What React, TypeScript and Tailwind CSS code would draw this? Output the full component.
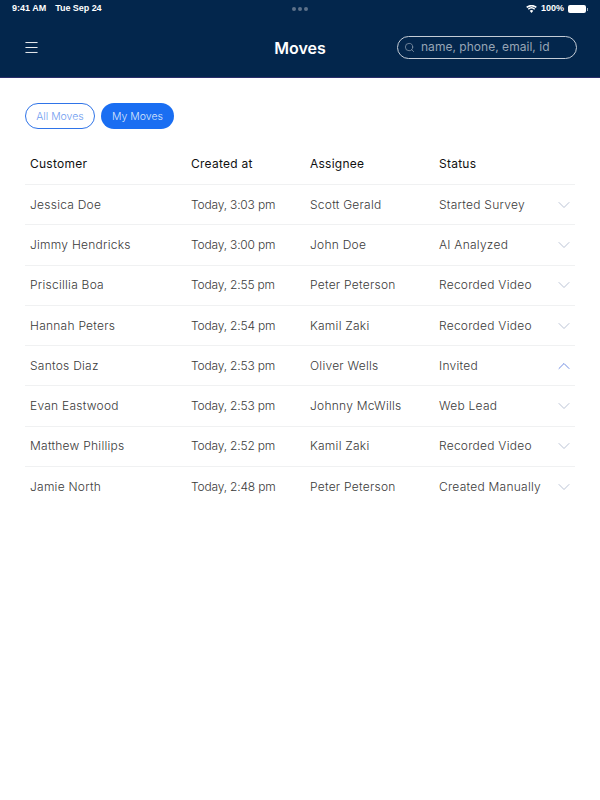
import { ChevronDown, ChevronUp, Menu, Search } from "lucide-react";

const rows = [
  { customer: "Jessica Doe", created: "Today, 3:03 pm", assignee: "Scott Gerald", status: "Started Survey" },
  { customer: "Jimmy Hendricks", created: "Today, 3:00 pm", assignee: "John Doe", status: "AI Analyzed" },
  { customer: "Priscillia Boa", created: "Today, 2:55 pm", assignee: "Peter Peterson", status: "Recorded Video" },
  { customer: "Hannah Peters", created: "Today, 2:54 pm", assignee: "Kamil Zaki", status: "Recorded Video" },
  { customer: "Santos Diaz", created: "Today, 2:53 pm", assignee: "Oliver Wells", status: "Invited", open: true },
  { customer: "Evan Eastwood", created: "Today, 2:53 pm", assignee: "Johnny McWills", status: "Web Lead" },
  { customer: "Matthew Phillips", created: "Today, 2:52 pm", assignee: "Kamil Zaki", status: "Recorded Video" },
  { customer: "Jamie North", created: "Today, 2:48 pm", assignee: "Peter Peterson", status: "Created Manually" },
];

const grid = "grid grid-cols-[161px_119px_129px_1fr_22px] items-center pl-[5px]";

const App = () => {
  return (
    <div className="w-[600px] h-[800px] bg-white font-['Inter',sans-serif] overflow-hidden">
      <header className="h-[78px] bg-[#03264c] border-b border-[#2b2f6b] text-white">
        {/* Status bar */}
        <div className="h-[18px] flex items-center justify-between pl-3 pr-[12px] font-['Liberation_Sans',sans-serif] text-[9px] font-bold">
          <div className="flex gap-[9px]">
            <span>9:41 AM</span>
            <span className="tracking-[-0.05px]">Tue Sep 24</span>
          </div>
          <div className="flex gap-[2px] ml-[-28px]">
            <span className="w-[4px] h-[4px] rounded-full bg-[#5d7189]" />
            <span className="w-[4px] h-[4px] rounded-full bg-[#5d7189]" />
            <span className="w-[4px] h-[4px] rounded-full bg-[#5d7189]" />
          </div>
          <div className="flex items-center gap-[4px]">
            <svg width="11" height="8" viewBox="0 0 12 9" fill="white">
              <path d="M6 9 4 6.600a3 3 0 0 1 4 0L6 9Z" />
              <path d="M2.900 5.400 1.800 4.100a6.400 6.400 0 0 1 8.400 0L9.100 5.400a4.700 4.700 0 0 0-6.200 0Z" />
              <path d="M1.200 3.400 0 2.100a9 9 0 0 1 12 0l-1.200 1.300a7.200 7.200 0 0 0-9.600 0Z" />
            </svg>
            <span>100%</span>
            <div className="flex items-center gap-[1px]">
              <div className="w-[18px] h-[8px] rounded-[2px] bg-white" />
              <div className="w-[1px] h-[3px] bg-white/60" />
            </div>
          </div>
        </div>
        {/* Nav bar */}
        <div className="relative h-[59px] flex items-center justify-between pl-[23px] pr-[23px]">
          <Menu size={17} strokeWidth={1.3} />
          <h1 className="absolute left-0 right-0 text-center text-[16px] font-semibold pointer-events-none">Moves</h1>
          <div className="w-[180px] h-[23px] -mt-[1px] flex items-center gap-[6px] pl-[6px] rounded-full border border-[#c4ccd6] text-[12px] text-[#97a5b5]">
            <Search size={11} strokeWidth={1.5} />
            <span className="tracking-[0.03px]">name, phone, email, id</span>
          </div>
        </div>
      </header>

      <main className="px-[25px] pt-[25px]">
        <div className="flex gap-[6px] text-[10.5px]">
          <button className="w-[70px] h-[26px] pt-[1px] rounded-full border border-[#2f74e8] text-[#6f9df0] font-light">All Moves</button>
          <button className="w-[73px] h-[26px] pt-[1px] rounded-full bg-[#1a6ef2] text-[#dbe7fc] font-light">My Moves</button>
        </div>

        <div className={`${grid} h-[56px] pt-[15px] text-[12px] tracking-[0.25px] font-normal text-[#111111] border-b border-[#f0f1f2]`}>
          <span>Customer</span>
          <span>Created at</span>
          <span>Assignee</span>
          <span>Status</span>
        </div>
        {rows.map((row) => (
          <div key={row.customer} className={`${grid} h-[40.3px] text-[12px] tracking-[0.25px] font-light text-[#3a3a3a] border-b border-[#f0f1f2] last:border-b-0`}>
            <span>{row.customer}</span>
            <span className="tracking-[-0.18px]">{row.created}</span>
            <span>{row.assignee}</span>
            <span className="whitespace-nowrap">{row.status}</span>
            {row.open ? (
              <ChevronUp size={20} strokeWidth={0.9} className="text-[#3f66d8] justify-self-center" />
            ) : (
              <ChevronDown size={20} strokeWidth={0.9} className="text-[#a3aec6] justify-self-center" />
            )}
          </div>
        ))}
      </main>
    </div>
  );
};

export default App;
